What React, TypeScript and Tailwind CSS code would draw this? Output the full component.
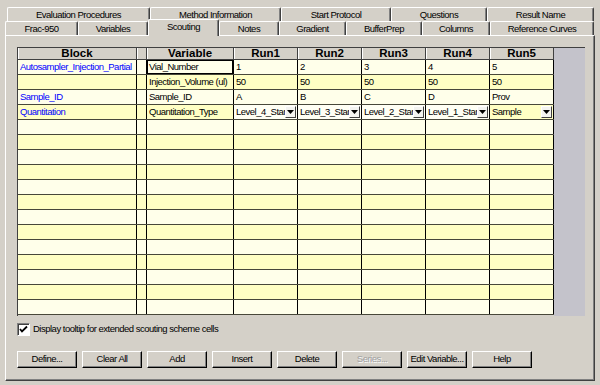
import React from "react";

// no narrow face installed, so squeeze Liberation Sans a little
const ui = "font-['Liberation_Sans',Arial,sans-serif] text-[9.5px] tracking-[-0.5px]";
const bold = "font-['Liberation_Sans',Arial,sans-serif] font-bold tracking-normal";

const TABS1 = [
  { label: "Evaluation Procedures", w: "w-[143px]" },
  { label: "Method Information", w: "w-[131px]" },
  { label: "Start Protocol", w: "w-[110px]" },
  { label: "Questions", w: "w-[96px]" },
  { label: "Result Name", w: "w-[107px]" },
];

const TABS2 = [
  { label: "Frac-950", w: "w-[73px]" },
  { label: "Variables", w: "w-[70px]" },
  { label: "Scouting", w: "w-[71px]", active: true },
  { label: "Notes", w: "w-[60px]" },
  { label: "Gradient", w: "w-[67px]" },
  { label: "BufferPrep", w: "w-[76px]" },
  { label: "Columns", w: "w-[68px]" },
  { label: "Reference Curves", w: "w-[104px]" },
];

const COLS = [
  "w-[119px]",
  "w-[10px]",
  "w-[87px]",
  "w-[64px]",
  "w-[64px]",
  "w-[64px]",
  "w-[64px]",
  "w-[64px]",
];

const HEADERS = ["Block", "", "Variable", "Run1", "Run2", "Run3", "Run4", "Run5"];

type Row = { block: string; variable: string; runs: string[]; combo?: boolean };

const DATA: Row[] = [
  { block: "Autosampler_Injection_Partial", variable: "Vial_Number", runs: ["1", "2", "3", "4", "5"] },
  { block: "", variable: "Injection_Volume (ul)", runs: ["50", "50", "50", "50", "50"] },
  { block: "Sample_ID", variable: "Sample_ID", runs: ["A", "B", "C", "D", "Prov"] },
  {
    block: "Quantitation",
    variable: "Quantitation_Type",
    runs: ["Level_4_Standard", "Level_3_Standard", "Level_2_Standard", "Level_1_Standard", "Sample"],
    combo: true,
  },
];

const ROWS: Row[] = [
  ...DATA,
  ...Array.from({ length: 13 }, () => ({ block: "", variable: "", runs: ["", "", "", "", ""] })),
];

const BUTTONS = ["Define...", "Clear All", "Add", "Insert", "Delete", "Series...", "Edit Variable...", "Help"];

function Tab({ label, w, active }: { label: string; w: string; active?: boolean }) {
  return (
    <div
      className={`${w} shrink-0 flex items-center justify-center whitespace-nowrap rounded-tl-[2px] rounded-tr-[2px] border-t border-l border-r border-t-white border-l-white border-r-[#404040] shadow-[inset_-1px_0_0_#808080] bg-[#d4d0c8] leading-none text-black ${
        active ? "relative z-10 h-[17px] -mt-[2px] pb-[3px]" : "h-[14px]"
      }`}
    >
      {label}
    </div>
  );
}

function ComboArrow() {
  return (
    <div className="w-[11px] h-[12px] shrink-0 flex items-center justify-center bg-[#f4f4f0] border border-t-white border-l-white border-r-[#404040] border-b-[#404040]">
      <svg width="7" height="4" viewBox="0 0 7 4">
        <polygon points="0,0 7,0 3.5,4" fill="#000" />
      </svg>
    </div>
  );
}

export default function App() {
  return (
    <div className={`w-[600px] h-[385px] bg-[#d4d0c8] pt-[7px] px-[5px] overflow-hidden ${ui}`}>
      <div className="flex ml-[2px]">
        {TABS1.map((t) => (
          <Tab key={t.label} label={t.label} w={t.w} />
        ))}
      </div>
      <div className="flex h-[14px] items-start">
        {TABS2.map((t) => (
          <Tab key={t.label} label={t.label} w={t.w} active={t.active} />
        ))}
      </div>

      <div className="h-[346px] w-[590px] border-t border-l border-r border-b border-t-white border-l-white border-r-[#404040] border-b-[#404040] shadow-[inset_-1px_-1px_0_#808080] pl-[11px] pt-[11px]">
        {/* grid */}
        <div className="w-[568px] h-[269px] flex border-t border-l border-[#404040] border-r-white border-b-white">
          <div className="flex flex-col">
            <div className="flex h-[12px] border-b border-[#404040] bg-[#d4d0c8]">
              {HEADERS.map((h, i) => (
                <div
                  key={i}
                  className={`${COLS[i]} h-full flex items-center justify-center border-r border-[#404040] shadow-[inset_1px_0_0_#ffffff] text-[11.5px] leading-none text-black ${bold}`}
                >
                  {h}
                </div>
              ))}
            </div>
            {ROWS.map((r, ri) => {
              const bg = ri % 2 === 0 ? "bg-[#ffffea]" : "bg-[#ffffc4]";
              return (
                <div key={ri} className={`flex h-[15px] border-b border-[#48483a] ${bg}`}>
                  <div className={`${COLS[0]} h-full flex items-center pl-[2px] border-r border-black text-[#0000ff] whitespace-nowrap overflow-hidden`}>
                    {r.block}
                  </div>
                  <div className={`${COLS[1]} h-full border-r border-black`} />
                  <div
                    className={`${COLS[2]} h-full flex items-center pl-[2px] border-r border-black text-black whitespace-nowrap overflow-hidden ${
                      ri === 0 ? "shadow-[inset_0_0_0_1px_#000000] bg-[#ffffea]" : ""
                    }`}
                  >
                    {r.variable}
                  </div>
                  {r.runs.map((v, ci) => (
                    <div
                      key={ci}
                      className={`${COLS[ci + 3]} h-full flex items-center border-r border-black text-black whitespace-nowrap overflow-hidden ${
                        r.combo ? (ci < 4 ? "bg-[#fffff4] pr-[1px]" : "bg-[#ffffc4] pr-[1px]") : "pl-[2px]"
                      }`}
                    >
                      {r.combo ? (
                        <>
                          <span className="flex-1 overflow-hidden pl-[2px]">{v}</span>
                          <ComboArrow />
                        </>
                      ) : (
                        v
                      )}
                    </div>
                  ))}
                </div>
              );
            })}
          </div>
          <div className="flex-1 bg-[#c4c3cb]" />
        </div>

        {/* checkbox */}
        <div className="flex items-center gap-[3px] mt-[7px] h-[13px]">
          <div className="w-[13px] h-[13px] bg-white border border-t-[#808080] border-l-[#808080] border-r-white border-b-white shadow-[inset_1px_1px_0_#404040] flex items-center justify-center">
            <svg width="9" height="9" viewBox="0 0 9 9">
              <polyline points="1,4 3,6.5 8,1.5" fill="none" stroke="#000" strokeWidth="1.8" />
            </svg>
          </div>
          <span className="text-black whitespace-nowrap">Display tooltip for extended scouting scheme cells</span>
        </div>

        {/* buttons */}
        <div className="flex gap-[5px] mt-[15px]">
          {BUTTONS.map((b) => {
            const disabled = b === "Series...";
            return (
              <div
                key={b}
                className={`w-[60px] h-[17px] flex items-center justify-center whitespace-nowrap border border-t-white border-l-white border-r-black border-b-black shadow-[inset_-1px_-1px_0_#808080] bg-[#d4d0c8] ${
                  disabled ? "text-[#a0a0a0] [text-shadow:1px_1px_0_#ffffff]" : "text-black"
                }`}
              >
                {b}
              </div>
            );
          })}
        </div>
      </div>
    </div>
  );
}
